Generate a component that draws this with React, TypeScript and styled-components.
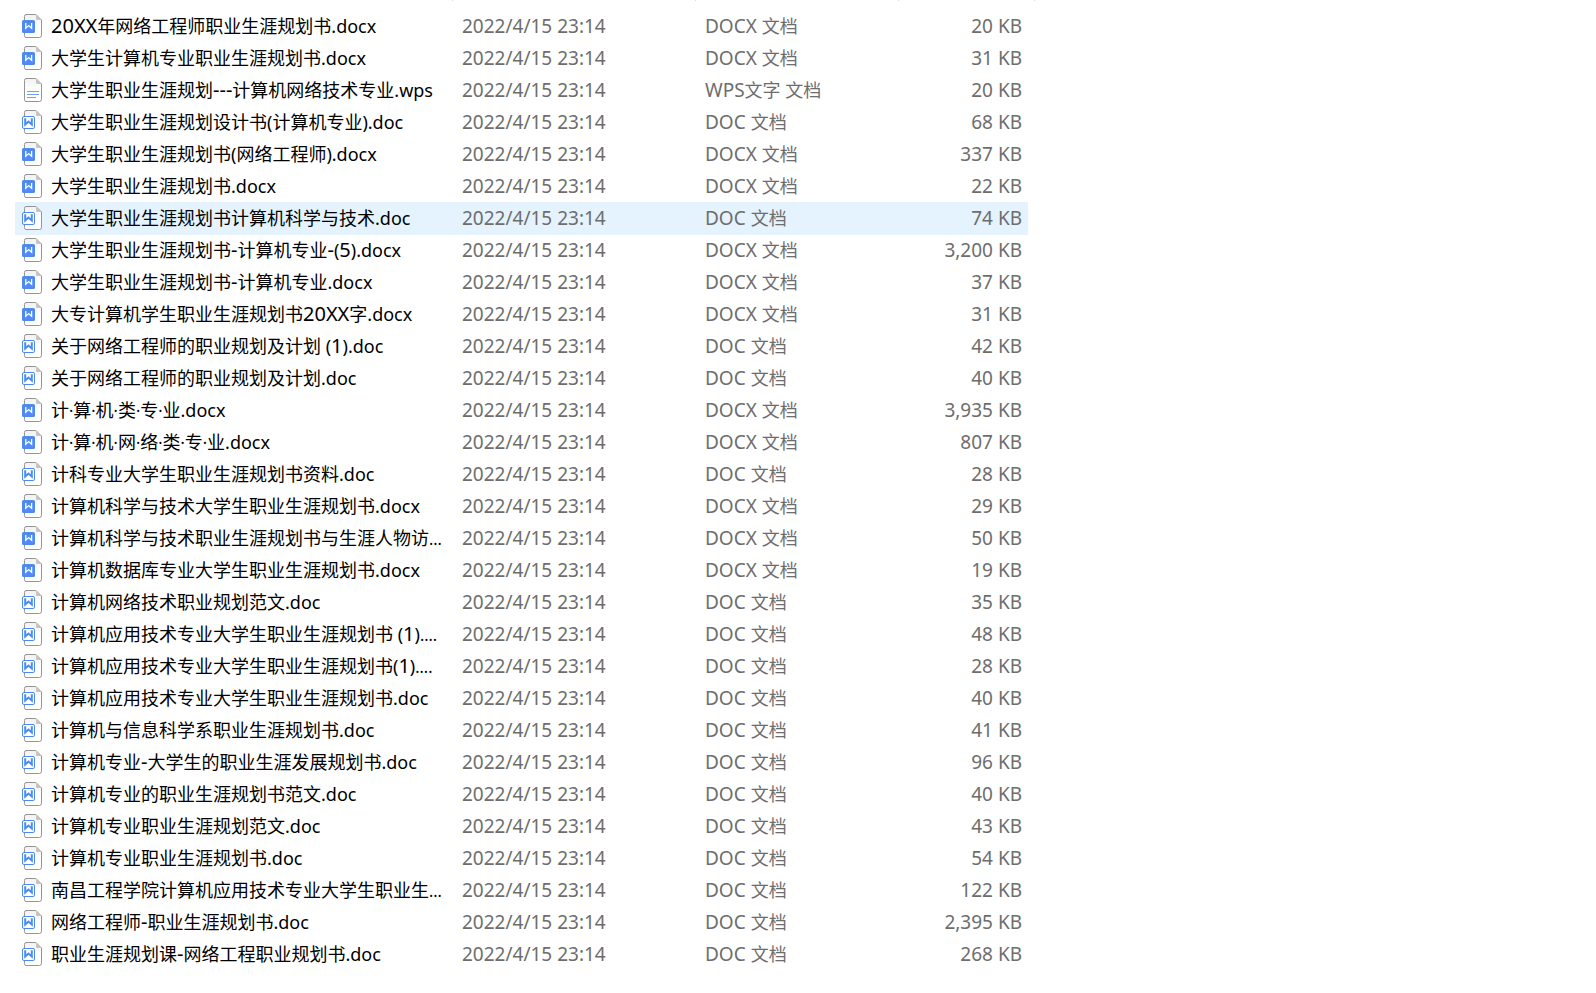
import React from "react";
import styled, { createGlobalStyle } from "styled-components";

const GlobalStyle = createGlobalStyle`
  * { box-sizing: border-box; }
  body {
    margin: 0;
    background: #ffffff;
    font-family: "Noto Sans", "Noto Sans CJK SC", sans-serif;
    color: #000000;
  }
`;

type Kind = "docx" | "doc" | "wps";

interface FileEntry {
  name: string;
  kind: Kind;
  size: string;
}

const MODIFIED = "2022/4/15 23:14";
const HIGHLIGHTED = 6;

const TYPE_LABELS: Record<Kind, { latin: string; cjk: string }> = {
  docx: { latin: "DOCX ", cjk: "文档" },
  doc: { latin: "DOC ", cjk: "文档" },
  wps: { latin: "WPS", cjk: "文字 文档" },
};

const FILES: FileEntry[] = [
  { name: "20XX年网络工程师职业生涯规划书.docx", kind: "docx", size: "20 KB" },
  { name: "大学生计算机专业职业生涯规划书.docx", kind: "docx", size: "31 KB" },
  { name: "大学生职业生涯规划---计算机网络技术专业.wps", kind: "wps", size: "20 KB" },
  { name: "大学生职业生涯规划设计书(计算机专业).doc", kind: "doc", size: "68 KB" },
  { name: "大学生职业生涯规划书(网络工程师).docx", kind: "docx", size: "337 KB" },
  { name: "大学生职业生涯规划书.docx", kind: "docx", size: "22 KB" },
  { name: "大学生职业生涯规划书计算机科学与技术.doc", kind: "doc", size: "74 KB" },
  { name: "大学生职业生涯规划书-计算机专业-(5).docx", kind: "docx", size: "3,200 KB" },
  { name: "大学生职业生涯规划书-计算机专业.docx", kind: "docx", size: "37 KB" },
  { name: "大专计算机学生职业生涯规划书20XX字.docx", kind: "docx", size: "31 KB" },
  { name: "关于网络工程师的职业规划及计划 (1).doc", kind: "doc", size: "42 KB" },
  { name: "关于网络工程师的职业规划及计划.doc", kind: "doc", size: "40 KB" },
  { name: "计·算·机·类·专·业.docx", kind: "docx", size: "3,935 KB" },
  { name: "计·算·机·网·络·类·专·业.docx", kind: "docx", size: "807 KB" },
  { name: "计科专业大学生职业生涯规划书资料.doc", kind: "doc", size: "28 KB" },
  { name: "计算机科学与技术大学生职业生涯规划书.docx", kind: "docx", size: "29 KB" },
  { name: "计算机科学与技术职业生涯规划书与生涯人物访...", kind: "docx", size: "50 KB" },
  { name: "计算机数据库专业大学生职业生涯规划书.docx", kind: "docx", size: "19 KB" },
  { name: "计算机网络技术职业规划范文.doc", kind: "doc", size: "35 KB" },
  { name: "计算机应用技术专业大学生职业生涯规划书 (1)....", kind: "doc", size: "48 KB" },
  { name: "计算机应用技术专业大学生职业生涯规划书(1)....", kind: "doc", size: "28 KB" },
  { name: "计算机应用技术专业大学生职业生涯规划书.doc", kind: "doc", size: "40 KB" },
  { name: "计算机与信息科学系职业生涯规划书.doc", kind: "doc", size: "41 KB" },
  { name: "计算机专业-大学生的职业生涯发展规划书.doc", kind: "doc", size: "96 KB" },
  { name: "计算机专业的职业生涯规划书范文.doc", kind: "doc", size: "40 KB" },
  { name: "计算机专业职业生涯规划范文.doc", kind: "doc", size: "43 KB" },
  { name: "计算机专业职业生涯规划书.doc", kind: "doc", size: "54 KB" },
  { name: "南昌工程学院计算机应用技术专业大学生职业生...", kind: "doc", size: "122 KB" },
  { name: "网络工程师-职业生涯规划书.doc", kind: "doc", size: "2,395 KB" },
  { name: "职业生涯规划课-网络工程职业规划书.doc", kind: "doc", size: "268 KB" },
];

const Page = styled.main`
  display: flex;
  flex-direction: column;
`;

const Dividers = styled.div`
  display: flex;
  height: 1px;
  padding-left: 15px;
  margin-bottom: 9px;
`;

const Divider = styled.div<{ $width: number }>`
  width: ${(p) => p.$width}px;
  border-right: 1px solid #dcdcdc;
`;

const FileTable = styled.table`
  width: 1013px;
  max-width: calc(100% - 15px);
  margin-left: 15px;
  table-layout: fixed;
  border-collapse: collapse;
`;

const Column = styled.col<{ $width?: number }>`
  width: ${(p) => (p.$width ? `${p.$width}px` : "auto")};
`;

const Row = styled.tr<{ $highlighted: boolean }>`
  height: 32px;
  background: ${(p) => (p.$highlighted ? "#e5f3ff" : "transparent")};
  box-shadow: ${(p) => (p.$highlighted ? "0 1px 0 #e5f3ff" : "none")};
`;

const Cell = styled.td<{ $align?: "right" }>`
  padding: 0 6px 0 9px;
  color: #6d6d6d;
  font-size: 19px;
  line-height: 32px;
  text-align: ${(p) => p.$align ?? "left"};
  white-space: pre;
`;

const NameCell = styled.th`
  padding: 0 0 0 6px;
  font-weight: 400;
  text-align: left;
`;

const NameLine = styled.div`
  display: flex;
  align-items: center;
  gap: 8px;
  height: 32px;
`;

const NameText = styled.span`
  font-size: 18px;
  line-height: 32px;
  white-space: pre;
`;

const Cjk = styled.span`
  font-size: 18px;
`;

const Figures = styled.span`
  font-size: 20px;
  line-height: 1;
`;

const Dots = styled.span`
  font-size: 16px;
  line-height: 1;
`;

const IconSvg = styled.svg`
  display: block;
  flex: none;
  width: 22px;
  height: 26px;
`;

function FileIcon({ kind }: { kind: Kind }) {
  return (
    <IconSvg viewBox="0 0 22 26" aria-hidden="true">
      <defs>
        <linearGradient id={`sheet-${kind}`} x1="0" y1="0" x2="0" y2="1">
          <stop offset="0" stopColor="#f1f1f1" />
          <stop offset="0.5" stopColor="#ffffff" />
        </linearGradient>
      </defs>
      <path
        d="M5 1.5H15L20.5 7V22.5Q20.5 24.5 18.5 24.5H5Q3.5 24.5 3.5 22.5V3.5Q3.5 1.5 5 1.5Z"
        fill={`url(#sheet-${kind})`}
        stroke="#959595"
      />
      <path d="M15 2L20 7H16.5Q15 7 15 5.5Z" fill="#c4c4c4" />
      {kind === "wps" && (
        <path d="M6 14.5H18M6 17.5H18M6 20.5H15" stroke="#6f9ff4" fill="none" />
      )}
      {kind === "docx" && (
        <>
          <rect x="1" y="7" width="13" height="13" rx="1.5" fill="#4e8af2" />
          <path d="M4.8 10V15.3L7.7 12.6L10.6 15.3V10" stroke="#ffffff" strokeWidth="1.3" fill="none" />
        </>
      )}
      {kind === "doc" && (
        <>
          <rect x="1.5" y="7.5" width="12" height="12" rx="1.5" fill="#ffffff" stroke="#4e8af2" />
          <path d="M4.2 9.3V15.6L7.5 12.6L10.8 15.6V9.3" stroke="#4e8af2" strokeWidth="2" fill="none" />
        </>
      )}
    </IconSvg>
  );
}

/* Figures and hyphens are set a little larger than the characters, dots a little smaller. */
function FileName({ name }: { name: string }) {
  return (
    <NameText>
      {name.split(/([0-9X-]+|·|\.{3,})/).map((run, i) => {
        if (/^[0-9X-]+$/.test(run)) return <Figures key={i}>{run}</Figures>;
        if (/^(·|\.{3,})$/.test(run)) return <Dots key={i}>{run}</Dots>;
        return run;
      })}
    </NameText>
  );
}

export default function App() {
  return (
    <Page>
      <GlobalStyle />
      <Dividers aria-hidden="true">
        <Divider $width={438} />
        <Divider $width={243} />
        <Divider $width={203} />
        <Divider $width={136} />
      </Dividers>
      <FileTable>
        <colgroup>
          <Column $width={438} />
          <Column $width={243} />
          <Column $width={203} />
          <Column />
        </colgroup>
        <tbody>
          {FILES.map((file, index) => (
            <Row key={file.name} $highlighted={index === HIGHLIGHTED}>
              <NameCell scope="row">
                <NameLine>
                  <FileIcon kind={file.kind} />
                  <FileName name={file.name} />
                </NameLine>
              </NameCell>
              <Cell>{MODIFIED}</Cell>
              <Cell>
                {TYPE_LABELS[file.kind].latin}
                <Cjk>{TYPE_LABELS[file.kind].cjk}</Cjk>
              </Cell>
              <Cell $align="right">{file.size}</Cell>
            </Row>
          ))}
        </tbody>
      </FileTable>
    </Page>
  );
}
